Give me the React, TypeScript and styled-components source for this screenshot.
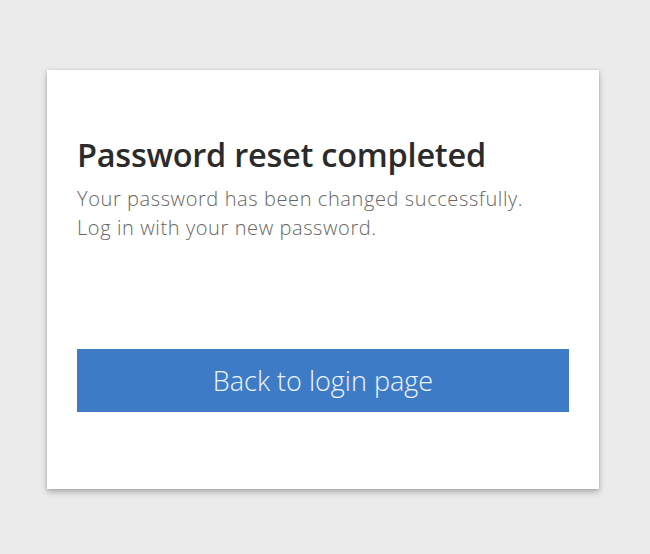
import React from "react";
import styled, { createGlobalStyle } from "styled-components";

const Global = createGlobalStyle`
  html, body { margin: 0; padding: 0; background: #ebebeb; }
  body { font-family: "Open Sans", "Noto Sans", sans-serif; }
`;

const Page = styled.div`
  width: 650px;
  height: 554px;
  box-sizing: border-box;
  padding: 70px 0 0 47px;
  background: #ebebeb;
`;

const Card = styled.div`
  width: 552px;
  height: 419px;
  box-sizing: border-box;
  background: #ffffff;
  padding: 67px 30px 0 30px;
  box-shadow: 0 3px 6px rgba(0, 0, 0, 0.28), 0 0 2px rgba(0, 0, 0, 0.12);
  display: flex;
  flex-direction: column;
`;

const Title = styled.h1`
  margin: 0;
  font-size: 32.5px;
  line-height: 36px;
  font-weight: 600;
  color: #2b2b2b;
  letter-spacing: -0.25px;
`;

const Text = styled.p`
  margin: 11px 0 0 0;
  font-size: 20px;
  line-height: 29px;
  font-weight: 300;
  color: #666666;
  letter-spacing: 0.6px;
`;

const Button = styled.button`
  margin-top: 107px;
  width: 492px;
  height: 63px;
  border: none;
  background: #3e7bc7;
  color: #eef4fb;
  font-family: inherit;
  font-size: 27px;
  font-weight: 300;
  cursor: pointer;
`;

export default function App() {
  return (
    <>
      <Global />
      <Page>
        <Card>
          <Title>Password reset completed</Title>
          <Text>
            Your password has been changed successfully.
            <br />
            Log in with your new password.
          </Text>
          <Button>Back to login page</Button>
        </Card>
      </Page>
    </>
  );
}
